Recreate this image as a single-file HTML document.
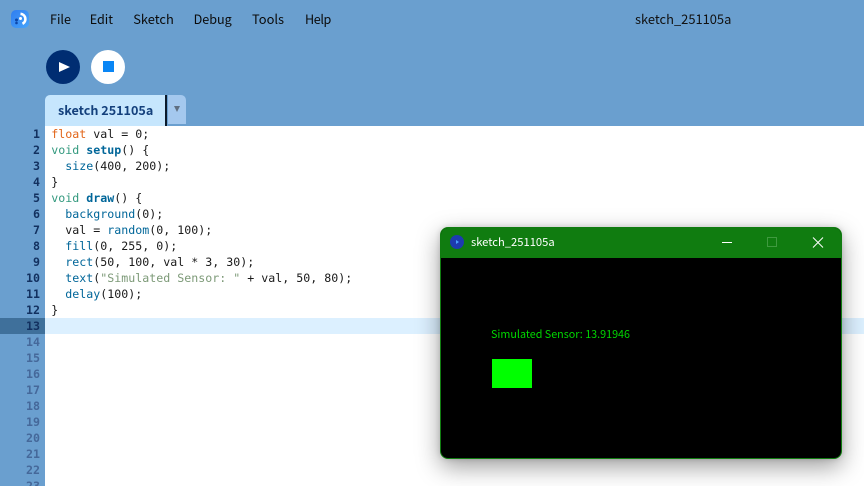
<!DOCTYPE html>
<html><head><meta charset="utf-8"><style>
html,body{margin:0;padding:0;width:864px;height:486px;overflow:hidden;background:#fff}
body{position:relative;font-family:"Noto Sans CJK JP","Liberation Sans",sans-serif}
.a{position:absolute}
.top{left:0;top:0;width:864px;height:126px;background:#6a9fcf}
.gut{left:0;top:126px;width:45px;height:360px;background:#6a9fcf}
.m{top:9px;font-size:12.6px;line-height:20px;color:#0b0b0b;white-space:nowrap}
.ln{left:0;width:40px;text-align:right;font:bold 11.63px/16px "DejaVu Sans Mono",monospace;color:#12305f;height:16px}
.ln.d{color:#45689a}
.c{left:51.3px;font:11.63px/16px "DejaVu Sans Mono",monospace;color:#1a1a1a;white-space:pre;height:16px}
.k{color:#33997e}.o{color:#e2661a}.f{color:#006699}.b{color:#006699;font-weight:bold}.s{color:#7d9a78}
</style></head><body>
<div class="a top"></div><div class="a gut"></div>
<svg class="a" style="left:11px;top:10px" width="18" height="18" viewBox="0 0 18 18"><defs><linearGradient id="g" x1="0" y1="0" x2="1" y2="1"><stop offset="0" stop-color="#2f7df0"/><stop offset="1" stop-color="#46a4fb"/></linearGradient></defs><rect width="18" height="18" rx="5" fill="url(#g)"/><path d="M9.500 3.800a5.300 5.300 0 0 1 2 10" fill="none" stroke="#fff" stroke-width="2.600"/><circle cx="9.500" cy="8.500" r="1.500" fill="#fff"/><circle cx="5.500" cy="10" r="1.500" fill="#0d47a8"/><circle cx="5.500" cy="13" r="1.300" fill="#0d47a8"/></svg>
<div class="a m" style="left:50px">File</div><div class="a m" style="left:89.700px">Edit</div><div class="a m" style="left:133.200px;font-size:12.900px">Sketch</div><div class="a m" style="left:193.600px">Debug</div><div class="a m" style="left:252px;font-size:12.900px">Tools</div><div class="a m" style="left:305px;letter-spacing:-.4px">Help</div>
<div class="a m" style="left:635px;color:#111;font-size:12.900px">sketch_251105a</div>
<div class="a" style="left:45.700px;top:49.700px;width:34.600px;height:34.600px;border-radius:50%;background:#002d72"></div>
<svg class="a" style="left:59px;top:61px" width="12" height="12"><path d="M0 1L11 6L0 11Z" fill="#fff"/></svg>
<div class="a" style="left:90.700px;top:49.700px;width:34.600px;height:34.600px;border-radius:50%;background:#fff"></div>
<div class="a" style="left:102.600px;top:61.400px;width:11px;height:11px;background:#0a86f5"></div>
<div class="a" style="left:45px;top:95px;width:120px;height:31px;background:#c6e6fd;border-radius:5px 0 0 0"></div>
<div class="a" style="left:165px;top:95px;width:1.500px;height:31px;background:#0b1a2c"></div>
<div class="a" style="left:58px;top:100px;font-size:12.600px;line-height:20px;font-weight:bold;color:#14407c;white-space:nowrap">sketch 251105a</div>
<div class="a" style="left:168px;top:95px;width:18px;height:29px;background:#a4c8ee;border-radius:0 5px 0 0"></div>
<svg class="a" style="left:173.500px;top:106px" width="7" height="7"><path d="M0 0H6L3 6Z" fill="#5f6f82"/></svg>
<div class="a" style="left:0;top:318px;width:45px;height:16px;background:#3f709b"></div>
<div class="a" style="left:45px;top:318px;width:819px;height:16px;background:#dcf0ff"></div>
<div class="a ln" style="top:126px">1</div><div class="a ln" style="top:142px">2</div><div class="a ln" style="top:158px">3</div><div class="a ln" style="top:174px">4</div><div class="a ln" style="top:190px">5</div><div class="a ln" style="top:206px">6</div><div class="a ln" style="top:222px">7</div><div class="a ln" style="top:238px">8</div><div class="a ln" style="top:254px">9</div><div class="a ln" style="top:270px">10</div><div class="a ln" style="top:286px">11</div><div class="a ln" style="top:302px">12</div><div class="a ln" style="top:318px">13</div>
<div class="a ln d" style="top:334px">14</div><div class="a ln d" style="top:350px">15</div><div class="a ln d" style="top:366px">16</div><div class="a ln d" style="top:382px">17</div><div class="a ln d" style="top:398px">18</div><div class="a ln d" style="top:414px">19</div><div class="a ln d" style="top:430px">20</div><div class="a ln d" style="top:446px">21</div><div class="a ln d" style="top:462px">22</div><div class="a ln d" style="top:478px">23</div>
<div class="a c" style="top:126px"><span class="o">float</span> val = 0;</div>
<div class="a c" style="top:142px"><span class="k">void</span> <span class="b">setup</span>() {</div>
<div class="a c" style="top:158px">  <span class="f">size</span>(400, 200);</div>
<div class="a c" style="top:174px">}</div>
<div class="a c" style="top:190px"><span class="k">void</span> <span class="b">draw</span>() {</div>
<div class="a c" style="top:206px">  <span class="f">background</span>(0);</div>
<div class="a c" style="top:222px">  val = <span class="f">random</span>(0, 100);</div>
<div class="a c" style="top:238px">  <span class="f">fill</span>(0, 255, 0);</div>
<div class="a c" style="top:254px">  <span class="f">rect</span>(50, 100, val * 3, 30);</div>
<div class="a c" style="top:270px">  <span class="f">text</span>(<span class="s">"Simulated Sensor: "</span> + val, 50, 80);</div>
<div class="a c" style="top:286px">  <span class="f">delay</span>(100);</div>
<div class="a c" style="top:302px">}</div>
<div class="a" style="left:440px;top:227px;width:402px;height:232px;border-radius:8px;background:#000;box-shadow:0 8px 24px rgba(0,0,0,.38),0 0 6px rgba(0,0,0,.15);overflow:hidden;box-sizing:border-box;border:1px solid #107c10">
<div class="a" style="left:-1px;top:-1px;width:402px;height:31px;background:#107c10"></div>
<div class="a" style="left:9px;top:7px;width:14px;height:14px;border-radius:50%;background:#1d3bb0"></div>
<div class="a" style="left:15px;top:12px;width:0;height:0;border-left:3px solid #4aa0ff;border-top:2px solid transparent;border-bottom:2px solid transparent"></div>
<div class="a" style="left:30px;top:5px;font-size:11.200px;line-height:18px;color:#fff;white-space:nowrap">sketch_251105a</div>
<svg class="a" style="left:280px;top:8px" width="110" height="14" fill="none"><path d="M1 6.500H11" stroke="#fff"/><rect x="46.500" y="1.500" width="9" height="9" stroke="#3f9a3f"/><path d="M92 1.500l10 10M102 1.500l-10 10" stroke="#fff"/></svg>
<div class="a" style="left:50px;top:99px;font-size:10.770px;line-height:16px;color:#00d800;white-space:nowrap">Simulated Sensor: 13.91946</div>
<div class="a" style="left:51px;top:131px;width:40px;height:29px;background:#0f0"></div>
</div>
</body></html>
